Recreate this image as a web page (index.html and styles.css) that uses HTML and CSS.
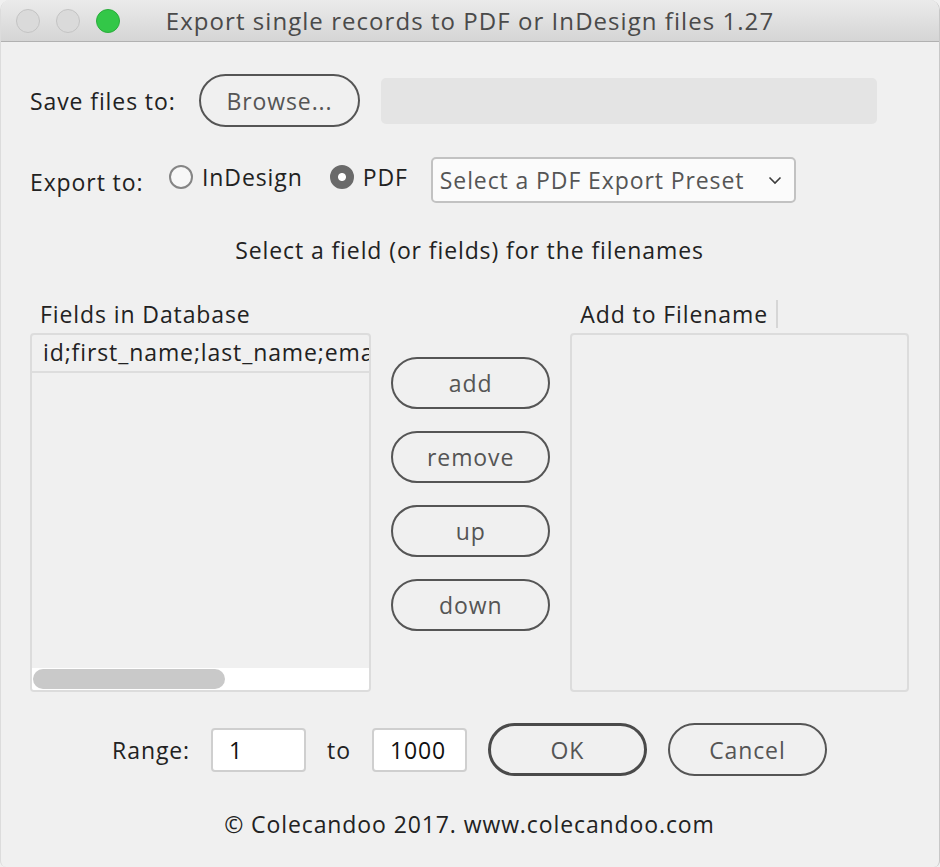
FILE: index.html
```html
<!DOCTYPE html>
<html lang="en">
<head>
  <meta charset="utf-8">
  <title>Export single records to PDF or InDesign files 1.27</title>
  <link rel="stylesheet" href="styles.css">
</head>
<body>
  <div class="window">
    <div class="titlebar">
      <div class="lights">
        <span class="light"></span>
        <span class="light"></span>
        <span class="light green"></span>
      </div>
      <div class="title">Export single records to PDF or InDesign files 1.27</div>
    </div>

    <div class="content">
      <div class="row row-save">
        <span class="label label-save">Save files to:</span>
        <button type="button" class="pill btn-browse">Browse...</button>
        <div class="path-field"></div>
      </div>

      <div class="row row-export">
        <span class="label label-export">Export to:</span>
        <label class="radio">
          <span class="radio-dot"></span>
          <span>InDesign</span>
        </label>
        <label class="radio checked">
          <span class="radio-dot"></span>
          <span>PDF</span>
        </label>
        <div class="select">
          <span>Select a PDF Export Preset</span>
          <svg class="chevron" width="14" height="9" viewBox="0 0 14 9">
            <polyline points="1.5,1.5 7,7 12.5,1.5" fill="none" stroke="#3c3c3c" stroke-width="1.6"/>
          </svg>
        </div>
      </div>

      <div class="heading">Select a field (or fields) for the filenames</div>

      <div class="columns">
        <div class="col col-left">
          <div class="col-head">Fields in Database</div>
          <div class="listbox">
            <div class="list-row">id;first_name;last_name;email</div>
            <div class="list-fill"></div>
            <div class="hscroll"><div class="thumb"></div></div>
          </div>
        </div>

        <div class="col col-mid">
          <button type="button" class="pill btn-side">add</button>
          <button type="button" class="pill btn-side">remove</button>
          <button type="button" class="pill btn-side">up</button>
          <button type="button" class="pill btn-side">down</button>
        </div>

        <div class="col col-right">
          <div class="col-head"><span class="head-sep">Add to Filename</span></div>
          <div class="listbox"></div>
        </div>
      </div>

      <div class="row row-range">
        <span class="label">Range:</span>
        <div class="num-field">1</div>
        <span class="label">to</span>
        <div class="num-field">1000</div>
        <button type="button" class="pill btn-ok">OK</button>
        <button type="button" class="pill btn-cancel">Cancel</button>
      </div>

      <div class="footer">© Colecandoo 2017. www.colecandoo.com</div>
    </div>
  </div>
</body>
</html>
```

FILE: styles.css
```css
body {
  margin: 0;
  background-color: #f0f0f0;
  font-family: "Open Sans", "Noto Sans", sans-serif;
  font-size: 23px;
  letter-spacing: 0.9px;
}
.window {
  width: 940px;
  height: 867px;
  background-color: #f0f0f0;
  border-radius: 10px 10px 6px 6px;
  overflow: hidden;
  box-sizing: border-box;
  border-left: 1px solid #dcdcdc;
  border-right: 1px solid #c8c8c8;
}
.titlebar {
  height: 41px;
  display: grid;
  align-items: center;
  background: linear-gradient(#ebebeb, #d5d5d5);
  border-bottom: 1px solid #b1b1b1;
}
.lights, .title {
  grid-area: 1 / 1;
}
.lights {
  display: flex;
  gap: 16px;
  padding-left: 15px;
}
.light {
  width: 22px;
  height: 22px;
  border-radius: 50%;
  background-color: #dadada;
  border: 1px solid #c3c3c3;
}
.light.green {
  background-color: #33c748;
  border-color: #2aac3c;
}
.title {
  text-align: center;
  font-size: 24px;
  letter-spacing: 1.05px;
  color: #4a4a4a;
}
.content {
  padding: 0 30px 0 29px;
}
.row {
  display: flex;
  align-items: center;
}
.label {
  color: #222;
}
.pill {
  font-family: inherit;
  font-size: 23px;
  letter-spacing: inherit;
  color: #555;
  background: transparent;
  border: 2px solid #555;
  border-radius: 27px;
  padding: 0;
  cursor: pointer;
}
.row-save {
  margin-top: 32px;
  height: 53px;
}
.label-save {
  width: 169px;
}
.btn-browse {
  width: 161px;
  height: 53px;
}
.path-field {
  width: 496px;
  height: 46px;
  margin-left: 21px;
  background-color: #e4e4e4;
  border-radius: 5px;
}
.row-export {
  margin-top: 30px;
  height: 46px;
}
.label-export {
  width: 139px;
  padding-top: 3px;
}
.radio {
  display: flex;
  align-items: center;
  gap: 9px;
  color: #222;
  margin-right: 27px;
  margin-bottom: 6px;
}
.radio-dot {
  width: 20px;
  height: 20px;
  border-radius: 50%;
  border: 2px solid #858585;
  background-color: #f7f7f7;
  box-sizing: content-box;
}
.radio.checked .radio-dot {
  background-color: #6a6a6a;
  border-color: #6a6a6a;
  background-image: radial-gradient(circle, #fff 0 3.5px, transparent 4.5px);
}
.radio.checked {
  margin-right: 23px;
}
.select {
  width: 365px;
  height: 46px;
  box-sizing: border-box;
  display: flex;
  align-items: center;
  justify-content: space-between;
  padding: 0 12px 0 7px;
  background-color: #fbfbfb;
  border: 2px solid #c2c2c2;
  border-radius: 5px;
  color: #555;
}
.heading {
  margin-top: 32px;
  line-height: 30px;
  text-align: center;
  color: #222;
}
.columns {
  margin-top: 35px;
  display: flex;
  gap: 20px;
}
.col {
  display: flex;
  flex-direction: column;
}
.col-left {
  width: 341px;
}
.col-right {
  width: 340px;
}
.col-head {
  height: 28px;
  line-height: 28px;
  padding-left: 10px;
  margin-bottom: 5px;
  color: #222;
}
.head-sep {
  display: inline-block;
  padding-right: 8px;
  border-right: 2px solid #d6d6d6;
}
.listbox {
  height: 359px;
  box-sizing: border-box;
  border: 2px solid #dcdcdc;
  border-radius: 4px;
  display: flex;
  flex-direction: column;
  overflow: hidden;
}
.list-row {
  height: 36px;
  line-height: 34px;
  padding-left: 11px;
  border-bottom: 2px solid #dddddd;
  white-space: nowrap;
  overflow: hidden;
  color: #222;
}
.list-fill {
  flex: 1;
}
.hscroll {
  height: 22px;
  background-color: #fff;
  padding: 1px 0 0 1px;
  box-sizing: border-box;
}
.thumb {
  width: 192px;
  height: 20px;
  border-radius: 10px;
  background-color: #c9c9c9;
}
.col-mid {
  width: 160px;
  padding-top: 57px;
  gap: 22px;
}
.btn-side {
  height: 52px;
}
.row-range {
  margin-top: 31px;
  height: 53px;
  justify-content: center;
  gap: 21px;
}
.num-field {
  width: 95px;
  height: 44px;
  box-sizing: border-box;
  padding-left: 16px;
  line-height: 40px;
  background-color: #fff;
  border: 2px solid #cfcfcf;
  border-radius: 4px;
  color: #111;
}
.btn-ok {
  width: 159px;
  height: 53px;
  border: 3px solid #4a4a4a;
}
.btn-cancel {
  width: 159px;
  height: 53px;
}
.footer {
  margin-top: 33px;
  line-height: 30px;
  text-align: center;
  color: #222;
}
```
